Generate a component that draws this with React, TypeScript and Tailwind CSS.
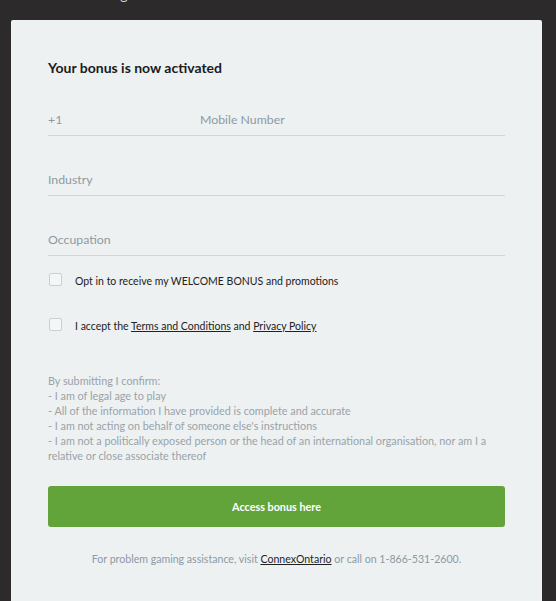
const font = { fontFamily: 'Lato, "Open Sans", Arial, sans-serif' };

function Field({ children }: { children: React.ReactNode }) {
  return (
    <div className="h-[60px] flex items-end pb-[5px] border-b border-[#cfd6da]">
      {children}
    </div>
  );
}

function Check({ children }: { children: React.ReactNode }) {
  return (
    <label className="flex items-start gap-[13px] pl-[1px] text-[10.5px] leading-[20px] text-[#222]">
      <span className="mt-[2px] w-[13px] h-[13px] shrink-0 rounded-[2px] border border-[#c9d0d4] bg-[#f4f6f7]" />
      <span>{children}</span>
    </label>
  );
}

export default function App() {
  return (
    <div className="min-h-[601px] bg-[#2d2a2b]" style={font}>
      <div className="h-[20px] overflow-hidden pl-[50px]">
        <h1 className="mt-[-12px] text-[14px] leading-[14px] text-[#d9d9d9]">Account Registration</h1>
      </div>
      <div className="ml-[11px] w-[531px] min-h-[581px] rounded-t-[2px] bg-[#eef1f2] px-[37px] pt-[40px] pb-[30px]">
        <h2 className="text-[14px] leading-[16px] font-bold text-[#1b1b1b]">Your bonus is now activated</h2>

        <Field>
          <div className="flex w-full text-[12.3px] leading-[20px] text-[#8d9aa2]">
            <span className="w-[152px]">+1</span>
            <span>Mobile Number</span>
          </div>
        </Field>
        <Field>
          <span className="text-[12.3px] leading-[20px] text-[#8d9aa2]">Industry</span>
        </Field>
        <Field>
          <span className="text-[12.3px] leading-[20px] text-[#8d9aa2]">Occupation</span>
        </Field>

        <div className="mt-[15px]">
          <Check>Opt in to receive my WELCOME BONUS and promotions</Check>
        </div>
        <div className="mt-[25px]">
          <Check>
            I accept the <a className="underline">Terms and Conditions</a> and{" "}
            <a className="underline">Privacy Policy</a>
          </Check>
        </div>

        <div className="mt-[37px] text-[10.8px] leading-[15px] text-[#98a3a9]">
          <p>By submitting I confirm:</p>
          <p>- I am of legal age to play</p>
          <p>- All of the information I have provided is complete and accurate</p>
          <p>- I am not acting on behalf of someone else's instructions</p>
          <p>
            - I am not a politically exposed person or the head of an international organisation, nor am I a
            relative or close associate thereof
          </p>
        </div>

        <button className="mt-[23px] w-full h-[41px] rounded-[3px] bg-[#62a43a] pt-[1px] text-white text-[10.8px] font-bold">
          Access bonus here
        </button>

        <p className="mt-[22px] text-center text-[10.6px] leading-[20px] text-[#8b9aa5]">
          For problem gaming assistance, visit{" "}
          <a className="underline text-[#1f1f1f]">ConnexOntario</a> or call on 1-866-531-2600.
        </p>
      </div>
    </div>
  );
}
